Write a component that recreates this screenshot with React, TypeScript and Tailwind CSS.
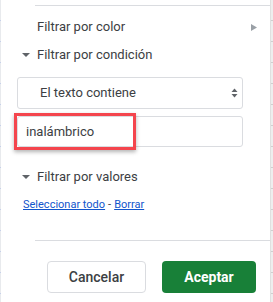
import React from "react";

export default function App() {
  return (
    <div
      className="w-[273px] h-[302px] flex bg-white overflow-hidden"
      style={{ fontFamily: "Roboto, 'Liberation Sans', sans-serif" }}
    >
      <div className="w-px h-full bg-[repeating-linear-gradient(to_bottom,#e8eaed_0px,#e8eaed_20px,#c6d0ea_20px,#c6d0ea_21px)]" />
      <div className="w-[269px] h-full flex flex-col text-[#3c4043]">
        <div className="mt-[5px] h-px ml-[34px] bg-[#dadce0]" />
        <div className="mt-[11px] h-[20px] flex items-center">
          <span className="ml-[36px] text-[13px]">Filtrar por color</span>
          <svg className="ml-auto mr-[13px]" width="6" height="7" viewBox="0 0 6 7">
            <path d="M0 0 L6 3.5 L0 7 Z" fill="#9aa0a6" />
          </svg>
        </div>
        <div className="mt-[8px] h-[20px] flex items-center">
          <svg className="ml-[21px]" width="8" height="4" viewBox="0 0 8 4">
            <path d="M0 0 L8 0 L4 4 Z" fill="#5f6368" />
          </svg>
          <span className="ml-[7px] text-[13px]">Filtrar por condición</span>
        </div>
        <div className="mt-[12px] ml-[16px] w-[226px] h-[32px] border border-[#dadce0] rounded-[3px] flex items-center">
          <span className="ml-[22px] text-[13px]">El texto contiene</span>
          <svg className="ml-auto mr-[4px]" width="7" height="10" viewBox="0 0 7 10">
            <path d="M0.5 4 L3.5 0.5 L6.5 4 Z" fill="#5f6368" />
            <path d="M0.5 6 L3.5 9.5 L6.5 6 Z" fill="#5f6368" />
          </svg>
        </div>
        <div className="relative mt-[7px] ml-[16px] w-[226px] h-[31px] border border-[#dadce0] rounded-[3px] flex items-center">
          <span className="ml-[8px] text-[13px]">inalámbrico</span>
          <div className="absolute left-[-4px] top-[-4px] w-[122px] h-[37px] border-[3px] border-[#f4454d] shadow-[0_2px_4px_rgba(0,0,0,0.3)]" />
        </div>
        <div className="mt-[20px] h-[20px] flex items-center">
          <svg className="ml-[21px]" width="8" height="4" viewBox="0 0 8 4">
            <path d="M0 0 L8 0 L4 4 Z" fill="#5f6368" />
          </svg>
          <span className="ml-[7px] text-[13px]">Filtrar por valores</span>
        </div>
        <div className="mt-[11px] ml-[22px] h-[14px] flex items-center text-[11px] text-[#1155cc]">
          <span className="underline">Seleccionar todo</span>
          <span className="text-[#3c4043] mx-[3px]">-</span>
          <span className="underline">Borrar</span>
        </div>
        <div className="mt-[28px] h-px ml-[34px] bg-[#dadce0]" />
        <div className="mt-[20px] flex h-[32px]">
          <button className="ml-[46px] w-[99px] h-[32px] border border-[#dadce0] rounded-[4px] bg-white text-[14px] text-[#3c4043] font-medium">
            Cancelar
          </button>
          <button className="ml-[16px] w-[94px] h-[32px] rounded-[4px] bg-[#188038] text-white text-[14px] font-bold">
            Aceptar
          </button>
        </div>
      </div>
      <div className="w-px h-full bg-[#e0e0e0]" />
      <div className="w-[2px] h-full bg-[repeating-linear-gradient(to_bottom,#eeeeee_0px,#eeeeee_20px,#cfcfcf_20px,#cfcfcf_21px)]" />
    </div>
  );
}
